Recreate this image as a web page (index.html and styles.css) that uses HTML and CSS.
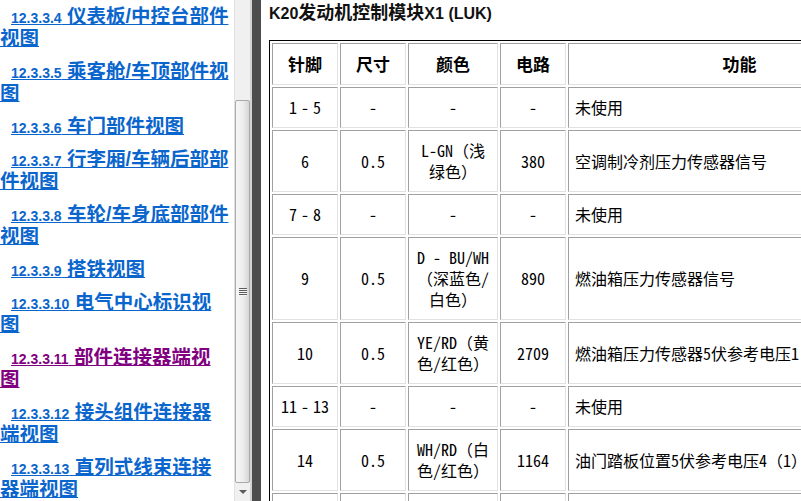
FILE: index.html
```html
<!DOCTYPE html>
<html lang="zh-CN">
<head>
  <meta charset="UTF-8">
  <title>K20发动机控制模块X1 (LUK)</title>
  <link rel="stylesheet" href="styles.css">
</head>
<body>

  <div class="frame">

    <!-- left frame: table of contents -->
    <div class="toc">
      <ul class="toc-list">
        <li><a href="#"><span class="num">12.3.3.4</span> 仪表板/中控台部件视图</a></li>
        <li><a href="#"><span class="num">12.3.3.5</span> 乘客舱/车顶部件视图</a></li>
        <li><a href="#"><span class="num">12.3.3.6</span> 车门部件视图</a></li>
        <li><a href="#"><span class="num">12.3.3.7</span> 行李厢/车辆后部部件视图</a></li>
        <li><a href="#"><span class="num">12.3.3.8</span> 车轮/车身底部部件视图</a></li>
        <li><a href="#"><span class="num">12.3.3.9</span> 搭铁视图</a></li>
        <li><a href="#"><span class="num">12.3.3.10</span> 电气中心标识视图</a></li>
        <li><a href="#" class="visited"><span class="num">12.3.3.11</span> 部件连接器端视图</a></li>
        <li><a href="#"><span class="num">12.3.3.12</span> 接头组件连接器端视图</a></li>
        <li><a href="#"><span class="num">12.3.3.13</span> 直列式线束连接器端视图</a></li>
      </ul>
      <div class="vscroll">
        <div class="vs-gap"></div>
        <div class="vs-thumb"><span class="grip"></span></div>
        <div class="vs-down"><span class="arrow"></span></div>
      </div>
      <div class="toc-edge"></div>
    </div>

    <div class="splitter"></div>

    <!-- right frame: pin table -->
    <div class="doc">
      <h3 class="doc-title">K20<span class="zh">发动机控制模块</span>X1 (LUK)</h3>
      <table class="pins">
        <colgroup>
          <col class="c-pin">
          <col class="c-size">
          <col class="c-color">
          <col class="c-circuit">
          <col>
        </colgroup>
        <thead>
          <tr><th>针脚</th><th>尺寸</th><th>颜色</th><th>电路</th><th>功能</th></tr>
        </thead>
        <tbody>
          <tr><td>1<span class="rng">-</span>5</td><td>-</td><td>-</td><td>-</td><td>未使用</td></tr>
          <tr><td>6</td><td>0.5</td><td>L-GN（浅<br>绿色）</td><td>380</td><td>空调制冷剂压力传感器信号</td></tr>
          <tr><td>7<span class="rng">-</span>8</td><td>-</td><td>-</td><td>-</td><td>未使用</td></tr>
          <tr><td>9</td><td>0.5</td><td>D - BU/WH<br>（深蓝色/<br>白色）</td><td>890</td><td>燃油箱压力传感器信号</td></tr>
          <tr><td>10</td><td>0.5</td><td>YE/RD（黄<br>色/红色）</td><td>2709</td><td>燃油箱压力传感器5伏参考电压1</td></tr>
          <tr><td>11<span class="rng">-</span>13</td><td>-</td><td>-</td><td>-</td><td>未使用</td></tr>
          <tr><td>14</td><td>0.5</td><td>WH/RD（白<br>色/红色）</td><td>1164</td><td>油门踏板位置5伏参考电压4（1）</td></tr>
          <tr><td>15</td><td>0.5</td><td>L-BU（浅<br>蓝色）</td><td>2700</td><td>油门踏板位置传感器低电平参考电压</td></tr>
        </tbody>
      </table>
    </div>

  </div>

</body>
</html>
```

FILE: styles.css
```css
body {
  margin: 0;
  background: #fff;
  color: #000;
  font-family: "Liberation Sans", "Noto Sans CJK SC", sans-serif;
}
.frame {
  display: flex;
  height: 501px;
  overflow: hidden;
}

/* contents frame */
.toc {
  display: flex;
  flex: none;
}
.toc-list {
  width: 234px;
  height: 501px;
  box-sizing: border-box;
  margin: 0;
  padding: 5px 4.5px 0 0;
  list-style: none;
  overflow: hidden;
}
.toc-list li {
  margin-bottom: 11px;
  text-indent: 11px;
  font: bold 19.5px/22px "Liberation Sans", "Noto Sans CJK SC", sans-serif;
}
.toc-list a {
  color: #0a66cc;
  text-decoration: underline;
}
.toc-list a.visited {
  color: #800080;
}
.num {
  font: bold 14px/14px "Liberation Sans", sans-serif;
}

/* scrollbar of the contents frame */
.vscroll {
  width: 16px;
  box-sizing: border-box;
  display: flex;
  flex-direction: column;
  background: #f0f0f0;
  border-left: 1px solid #e2e2e2;
}
.vs-gap {
  height: 100px;
  flex: none;
}
.vs-thumb {
  flex: 1;
  display: flex;
  align-items: center;
  justify-content: center;
  border: 1px solid #a9a9a9;
  border-radius: 2px;
  background: linear-gradient(to right, #f7f7f7, #ececec 55%, #d6d6d6);
}
.grip {
  width: 8px;
  height: 8px;
  background: repeating-linear-gradient(to bottom, #5e5e5e 0 1px, #f4f4f4 1px 2px);
}
.vs-down {
  height: 18px;
  flex: none;
  display: flex;
  align-items: center;
  justify-content: center;
}
.arrow {
  width: 0;
  height: 0;
  border-left: 4px solid transparent;
  border-right: 4px solid transparent;
  border-top: 4px solid #5a5a5a;
}
.toc-edge {
  width: 2px;
  background: #d4d4d4;
}
.splitter {
  width: 9px;
  flex: none;
  background: #4d4d4d;
}

/* document frame */
.doc {
  flex: 1;
  min-width: 0;
  overflow: hidden;
  padding-left: 8px;
}
.doc-title {
  margin: 4px 0 16px;
  font-size: 16px;
  line-height: 20px;
  font-weight: bold;
  color: #111;
}
.doc-title .zh {
  font-size: 18px;
  line-height: 16px;
}

.pins {
  width: 645px;
  table-layout: fixed;
  border: 1px solid #000;
  border-spacing: 2px;
  font-family: "Noto Sans Mono CJK SC", "Noto Sans CJK SC", monospace;
  font-size: 16px;
  line-height: 21px;
}
.pins col.c-pin,
.pins col.c-size,
.pins col.c-circuit {
  width: 66px;
}
.pins col.c-color {
  width: 90px;
}
.pins th,
.pins td {
  box-sizing: border-box;
  padding: 9px 2px;
  border: 1px solid;
  border-color: #a0a0a0 #e2e2e2 #e2e2e2 #a0a0a0;
  text-align: center;
  vertical-align: middle;
  font-weight: normal;
}
.pins th {
  font: bold 17px/22px "Noto Sans CJK SC", sans-serif;
}
.pins td:last-child {
  text-align: left;
  padding-left: 6px;
  white-space: nowrap;
}
/* pin ranges: dash set a little apart from the numbers */
.rng {
  margin: 0 4px;
}
```
